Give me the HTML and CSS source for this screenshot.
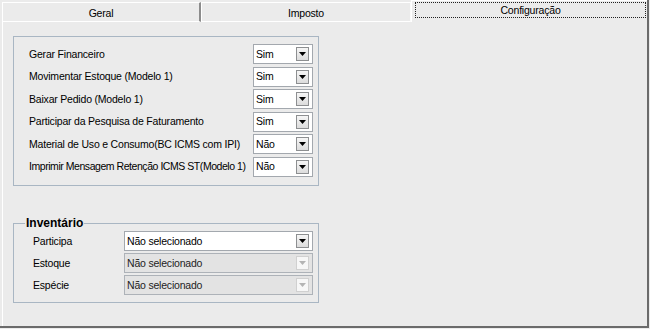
FILE: index.html
```html
<!DOCTYPE html>
<html>
<head>
    <meta charset="utf-8">
    <title>Configuração</title>
    <link rel="stylesheet" href="styles.css">
</head>
<body>

<div class="window">
    <!--Tabs-->
    <div class="tabs">
        <div class="tab tab-geral">Geral</div>
        <div class="tab tab-imposto">Imposto</div>
        <div class="tab tab-active"><span class="focus">Configuração</span></div>
    </div>

    <div class="panel">
        <!--Options block-->
        <div class="group">
            <div class="row">
                <span class="label">Gerar Financeiro</span>
                <div class="combo"><span class="val">Sim</span><span class="btn"><svg width="7" height="4" viewBox="0 0 7 4"><path d="M0 0H7L3.5 4Z"/></svg></span></div>
            </div>
            <div class="row">
                <span class="label">Movimentar Estoque (Modelo 1)</span>
                <div class="combo"><span class="val">Sim</span><span class="btn"><svg width="7" height="4" viewBox="0 0 7 4"><path d="M0 0H7L3.5 4Z"/></svg></span></div>
            </div>
            <div class="row">
                <span class="label">Baixar Pedido (Modelo 1)</span>
                <div class="combo"><span class="val">Sim</span><span class="btn"><svg width="7" height="4" viewBox="0 0 7 4"><path d="M0 0H7L3.5 4Z"/></svg></span></div>
            </div>
            <div class="row">
                <span class="label">Participar da Pesquisa de Faturamento</span>
                <div class="combo"><span class="val">Sim</span><span class="btn"><svg width="7" height="4" viewBox="0 0 7 4"><path d="M0 0H7L3.5 4Z"/></svg></span></div>
            </div>
            <div class="row">
                <span class="label">Material de Uso e Consumo(BC ICMS com IPI)</span>
                <div class="combo"><span class="val">Não</span><span class="btn"><svg width="7" height="4" viewBox="0 0 7 4"><path d="M0 0H7L3.5 4Z"/></svg></span></div>
            </div>
            <div class="row">
                <span class="label tight">Imprimir Mensagem Retenção ICMS ST(Modelo 1)</span>
                <div class="combo"><span class="val">Não</span><span class="btn"><svg width="7" height="4" viewBox="0 0 7 4"><path d="M0 0H7L3.5 4Z"/></svg></span></div>
            </div>
        </div>

        <!--Inventario block-->
        <fieldset class="inv">
            <legend>Inventário</legend>
            <div class="inv-rows">
                <div class="row">
                    <span class="label">Participa</span>
                    <div class="combo wide"><span class="val">Não selecionado</span><span class="btn"><svg width="7" height="4" viewBox="0 0 7 4"><path d="M0 0H7L3.5 4Z"/></svg></span></div>
                </div>
                <div class="row">
                    <span class="label">Estoque</span>
                    <div class="combo wide off"><span class="val">Não selecionado</span><span class="btn"><svg width="7" height="4" viewBox="0 0 7 4"><path d="M0 0H7L3.5 4Z"/></svg></span></div>
                </div>
                <div class="row">
                    <span class="label">Espécie</span>
                    <div class="combo wide off"><span class="val">Não selecionado</span><span class="btn"><svg width="7" height="4" viewBox="0 0 7 4"><path d="M0 0H7L3.5 4Z"/></svg></span></div>
                </div>
            </div>
        </fieldset>
    </div>
</div>

</body>
</html>
```

FILE: styles.css
```css
*{ margin: 0; padding: 0; }
body{ background: #ebebeb; font: 10.5px/13px "Liberation Sans", Arial, sans-serif; color: #000; letter-spacing: -0.2px; }

.window{ width: 645px; height: 326px; padding-left: 2px; border-right: 2px solid #6b6b6b; border-bottom: 2px solid #6b6b6b; display: flex; flex-direction: column; }

/*tabs*/
.tabs{ display: flex; align-items: flex-end; height: 22px; }
.tab{ height: 20px; box-sizing: border-box; border-top: 1px solid #fff; border-left: 1px solid #fff; border-bottom: 1px solid #fff; display: flex; align-items: center; justify-content: center; padding-top: 2px; }
.tab-geral{ width: 199px; border-right: 2px solid #8c8c8c; }
.tab-imposto{ width: 210px; border-right: 1px solid #fafafa; }
.tab-active{ flex: 1; height: 22px; border-bottom: none; padding: 1px 1px 4px 3px; align-items: stretch; }
.tab-active .focus{ flex: 1; border: 1px dotted #222; display: flex; align-items: center; justify-content: center; }

/*panel*/
.panel{ flex: 1; border-left: 1px solid #fff; padding: 14px 0 0 10px; }

.group{ width: 306px; height: 150px; box-sizing: border-box; border: 1px solid #a9b6c3; padding: 7px 5px 0 15px; display: flex; flex-direction: column; gap: 2.5px; }
.row{ display: flex; align-items: center; justify-content: space-between; height: 20px; }
.label{ white-space: nowrap; }
.label.tight{ letter-spacing: -0.45px; }

/*combo boxes*/
.combo{ width: 60px; height: 20px; flex-shrink: 0; box-sizing: border-box; border: 1px solid #a3a8ae; background: #fff; display: flex; align-items: center; padding-left: 2px; }
.combo .val{ flex: 1; white-space: nowrap; overflow: hidden; }
.combo .btn{ width: 13px; height: 14px; margin-right: 3px; box-sizing: border-box; border: 1px solid #8d8f91; background: linear-gradient(#f6f6f6, #dcdcdc); display: flex; align-items: center; justify-content: center; }
.combo .btn svg{ fill: #000; }
.combo.wide{ width: 189px; }
.combo.off{ background: #e3e3e3; border-color: #adb2b8; color: #222; }
.combo.off .btn{ border-color: #d0d0d0; background: #f7f7f7; }
.combo.off .btn svg{ fill: #b4b4b4; }

/*inventario*/
.inv{ width: 306px; box-sizing: border-box; margin-top: 31px; border: 1px solid #a9b6c3; padding: 0 5px 7px 0; }
.inv legend{ margin-left: 11px; padding: 0 1px; font-weight: bold; font-size: 12px; letter-spacing: 0; }
.inv-rows{ padding: 1px 0 0 19px; display: flex; flex-direction: column; gap: 2px; }
.inv .label{ width: 91px; }
```
